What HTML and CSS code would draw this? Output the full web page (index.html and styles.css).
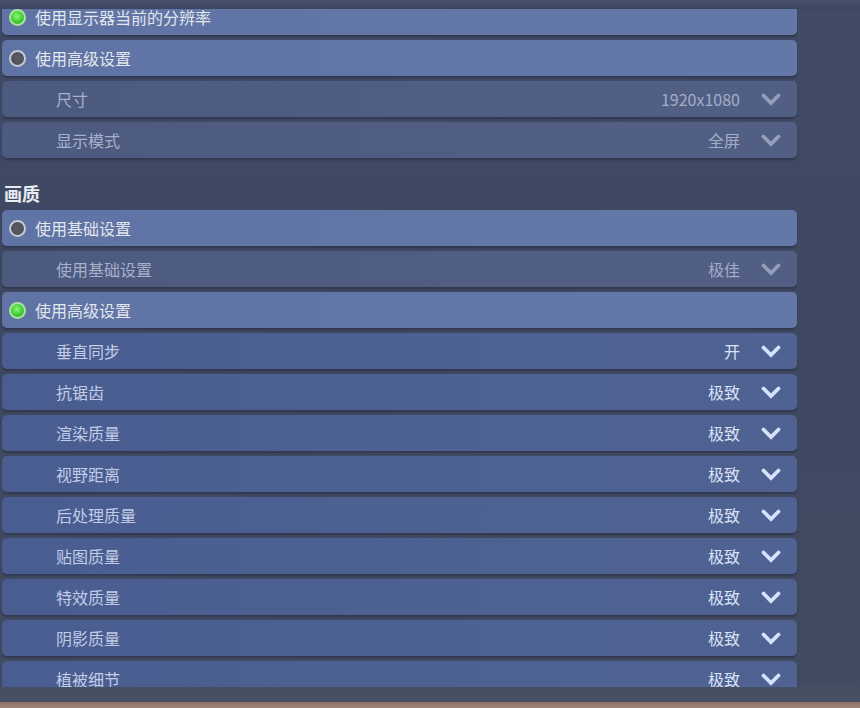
FILE: index.html
```html
<!DOCTYPE html>
<html lang="zh-CN">
<head>
<meta charset="utf-8">
<title>设置</title>
<link rel="stylesheet" href="styles.css">
</head>
<body>
<div class="page">
  <div class="top-fade"></div>
  <div class="viewport">
    <div class="list">
      <div class="row radio"><span class="dot on"></span><span class="label">使用显示器当前的分辨率</span></div>
      <div class="row radio"><span class="dot"></span><span class="label">使用高级设置</span></div>
      <div class="row sub off"><span class="label">尺寸</span><span class="value">1920x1080</span><svg class="chev" viewBox="0 0 20 13"><path d="M2.5 2.5 L10 10 L17.5 2.5"/></svg></div>
      <div class="row sub off"><span class="label">显示模式</span><span class="value">全屏</span><svg class="chev" viewBox="0 0 20 13"><path d="M2.5 2.5 L10 10 L17.5 2.5"/></svg></div>
      <div class="section">画质</div>
      <div class="row radio"><span class="dot"></span><span class="label">使用基础设置</span></div>
      <div class="row sub off"><span class="label">使用基础设置</span><span class="value">极佳</span><svg class="chev" viewBox="0 0 20 13"><path d="M2.5 2.5 L10 10 L17.5 2.5"/></svg></div>
      <div class="row radio"><span class="dot on"></span><span class="label">使用高级设置</span></div>
      <div class="row sub"><span class="label">垂直同步</span><span class="value">开</span><svg class="chev" viewBox="0 0 20 13"><path d="M2.5 2.5 L10 10 L17.5 2.5"/></svg></div>
      <div class="row sub"><span class="label">抗锯齿</span><span class="value">极致</span><svg class="chev" viewBox="0 0 20 13"><path d="M2.5 2.5 L10 10 L17.5 2.5"/></svg></div>
      <div class="row sub"><span class="label">渲染质量</span><span class="value">极致</span><svg class="chev" viewBox="0 0 20 13"><path d="M2.5 2.5 L10 10 L17.5 2.5"/></svg></div>
      <div class="row sub"><span class="label">视野距离</span><span class="value">极致</span><svg class="chev" viewBox="0 0 20 13"><path d="M2.5 2.5 L10 10 L17.5 2.5"/></svg></div>
      <div class="row sub"><span class="label">后处理质量</span><span class="value">极致</span><svg class="chev" viewBox="0 0 20 13"><path d="M2.5 2.5 L10 10 L17.5 2.5"/></svg></div>
      <div class="row sub"><span class="label">贴图质量</span><span class="value">极致</span><svg class="chev" viewBox="0 0 20 13"><path d="M2.5 2.5 L10 10 L17.5 2.5"/></svg></div>
      <div class="row sub"><span class="label">特效质量</span><span class="value">极致</span><svg class="chev" viewBox="0 0 20 13"><path d="M2.5 2.5 L10 10 L17.5 2.5"/></svg></div>
      <div class="row sub"><span class="label">阴影质量</span><span class="value">极致</span><svg class="chev" viewBox="0 0 20 13"><path d="M2.5 2.5 L10 10 L17.5 2.5"/></svg></div>
      <div class="row sub"><span class="label">植被细节</span><span class="value">极致</span><svg class="chev" viewBox="0 0 20 13"><path d="M2.5 2.5 L10 10 L17.5 2.5"/></svg></div>
    </div>
  </div>
  <div class="bottom-band"></div>
  <div class="floor"></div>
</div>
</body>
</html>
```

FILE: styles.css
```css
html, body {
  margin: 0;
  padding: 0;
}
body {
  width: 860px;
  height: 708px;
  overflow: hidden;
  font-family: "Noto Sans CJK SC", "Noto Sans", sans-serif;
  background: linear-gradient(180deg, #414a66 0%, #3f4862 50%, #434b61 100%);
}
.page {
  height: 708px;
  display: flex;
  flex-direction: column;
}
.top-fade {
  height: 9px;
  flex: none;
  background: linear-gradient(180deg, #48516b 0%, #3c4560 100%);
}
.viewport {
  height: 678px;
  flex: none;
  overflow: hidden;
}
.list {
  margin-top: -10px;
  width: 795px;
  margin-left: 2px;
  display: flex;
  flex-direction: column;
  gap: 5px;
}
.row {
  height: 36px;
  flex: none;
  box-sizing: border-box;
  border-radius: 5px;
  display: flex;
  align-items: center;
  font-size: 16px;
  box-shadow: 0 2px 2px rgba(20, 25, 40, 0.35);
}
.row.radio {
  background: linear-gradient(90deg, #5f74a5 0%, #6277a6 60%, #6378a6 100%);
  padding-left: 7px;
  color: #e3e6ec;
}
.row.sub {
  padding-left: 54px;
  padding-right: 16px;
  background: linear-gradient(90deg, #4a5d90 0%, #4d6193 60%, #4f6292 100%);
  color: #c2cce8;
}
.row.sub.off {
  background: linear-gradient(90deg, #4d5a80 0%, #515e84 60%, #525f84 100%);
  color: #a6b0cb;
}
.label {
  line-height: 20px;
}
.dot {
  width: 13px;
  height: 13px;
  border-radius: 50%;
  border: 2px solid #c6cad6;
  background: radial-gradient(circle at 50% 45%, #5a5c63 0%, #4a4c53 100%);
  margin-right: 9px;
  flex: none;
}
.dot.on {
  border-color: #a9e4a0;
  background: radial-gradient(circle at 45% 40%, #8ff57c 0%, #3fcb33 55%, #26a524 100%);
}
.value {
  margin-left: auto;
  line-height: 20px;
  color: #dbe2f5;
}
.row.sub.off .value {
  color: #a3adc8;
}
.chev {
  width: 20px;
  height: 13px;
  margin-left: 21px;
  flex: none;
}
.chev path {
  fill: none;
  stroke: #d6e2fc;
  stroke-width: 3.8;
  stroke-linecap: round;
  stroke-linejoin: miter;
}
.row.sub.off .chev path {
  stroke: #929eba;
}
.section {
  height: 42px;
  flex: none;
  display: flex;
  align-items: flex-end;
  padding-left: 2px;
  font-size: 18px;
  font-weight: 700;
  line-height: 24px;
  color: #e9ecf3;
}
.bottom-band {
  height: 15px;
  flex: none;
  background: #474f63;
}
.floor {
  height: 6px;
  flex: none;
  background: linear-gradient(180deg, #8a7064 0%, #a3857a 100%);
}
```
